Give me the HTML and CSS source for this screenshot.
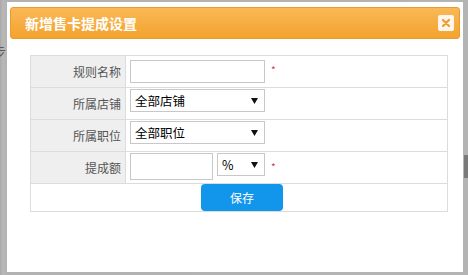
FILE: index.html
```html
<!DOCTYPE html>
<html lang="zh-CN">
<head>
<meta charset="utf-8">
<title>新增售卡提成设置</title>
<link rel="stylesheet" href="styles.css">
</head>
<body>
<span class="bg-text">步</span>
<span class="bg-patch"></span>
<div class="dialog">
  <div class="dialog-header">
    <span class="dialog-title">新增售卡提成设置</span>
    <span class="close-btn">
      <svg width="8" height="8" viewBox="0 0 8 8"><path d="M1 1L7 7M7 1L1 7" stroke="#f29a2b" stroke-width="2.2" stroke-linecap="round"/></svg>
    </span>
  </div>
  <div class="form">
    <div class="row">
      <div class="label">规则名称</div>
      <div class="field field-first">
        <input class="text-input" type="text">
        <span class="req">*</span>
      </div>
    </div>
    <div class="row">
      <div class="label">所属店铺</div>
      <div class="field">
        <div class="select">
          <span>全部店铺</span>
          <svg class="arrow" width="7" height="6" viewBox="0 0 7 6"><path d="M0 0H7L3.5 6Z" fill="#111"/></svg>
        </div>
      </div>
    </div>
    <div class="row">
      <div class="label">所属职位</div>
      <div class="field">
        <div class="select">
          <span>全部职位</span>
          <svg class="arrow" width="7" height="6" viewBox="0 0 7 6"><path d="M0 0H7L3.5 6Z" fill="#111"/></svg>
        </div>
      </div>
    </div>
    <div class="row">
      <div class="label">提成额</div>
      <div class="field">
        <input class="text-input amount" type="text">
        <div class="select unit">
          <span>%</span>
          <svg class="arrow" width="7" height="6" viewBox="0 0 7 6"><path d="M0 0H7L3.5 6Z" fill="#111"/></svg>
        </div>
        <span class="req req-amount">*</span>
      </div>
    </div>
    <div class="row row-actions">
      <button class="save-btn" type="button">保存</button>
    </div>
  </div>
</div>
</body>
</html>
```

FILE: styles.css
```css
html, body {
  margin: 0;
  padding: 0;
}

body {
  width: 468px;
  height: 275px;
  box-sizing: border-box;
  padding: 2px 5px 3px 7px;
  background: linear-gradient(90deg, #a9a9a9 0, #b8b8b8 3px, #b2b2b2 7px, #b4b4b4 100%);
  font-family: "Noto Sans CJK SC", "Microsoft YaHei", sans-serif;
  position: relative;
  overflow: hidden;
}

.bg-text {
  position: absolute;
  left: -8px;
  top: 41px;
  font-size: 14px;
  color: #5a5a5a;
}

.bg-patch {
  position: absolute;
  left: 464px;
  top: 155px;
  width: 4px;
  height: 23px;
  background: #7a7a7a;
}

.dialog {
  position: relative;
  height: 270px;
  background: #fff;
  display: flex;
  flex-direction: column;
}

.dialog-header {
  margin: 5px 3px 0 3px;
  height: 32px;
  box-sizing: border-box;
  border: 1px solid #eb9a30;
  border-radius: 3px;
  background: linear-gradient(180deg, #f9b957 0%, #f6ad42 50%, #f4a32e 100%);
  display: flex;
  align-items: center;
  justify-content: space-between;
  padding: 0 5px 0 14px;
}

.dialog-title {
  color: #fff;
  font-size: 14px;
  font-weight: bold;
}

.close-btn {
  width: 16px;
  height: 16px;
  border-radius: 2px;
  background: #fdf6ec;
  display: flex;
  align-items: center;
  justify-content: center;
}

.form {
  margin: 16px 0 0 23px;
  width: 418px;
  box-sizing: border-box;
  border: 1px solid #dcdcdc;
}

.row {
  display: grid;
  grid-template-columns: 95px 1fr;
  height: 32px;
  box-sizing: border-box;
  border-bottom: 1px solid #dcdcdc;
}

.label {
  background: #efefef;
  border-right: 1px solid #dcdcdc;
  text-align: right;
  padding-right: 4px;
  font-size: 12px;
  line-height: 31px;
  color: #555;
}

.field {
  display: flex;
  align-items: flex-start;
  padding: 1px 0 0 4px;
}

.field-first {
  padding-top: 4px;
}

.text-input {
  width: 135px;
  height: 23px;
  box-sizing: border-box;
  border: 1px solid #c8c8c8;
  margin: 0;
  padding: 0 4px;
  font: inherit;
  outline: none;
}

.text-input.amount {
  width: 83px;
  height: 27px;
}

.select {
  width: 135px;
  height: 23px;
  box-sizing: border-box;
  border: 1px solid #c8c8c8;
  display: flex;
  align-items: center;
  justify-content: space-between;
  padding: 0 6px 0 4px;
  font-size: 12.5px;
  color: #000;
  background: #fff;
}

.select.unit {
  width: 48px;
  margin-left: 4px;
}

.arrow {
  display: block;
}

.req {
  color: #d33a3a;
  font-size: 10px;
  margin: 5px 0 0 6px;
  line-height: 1;
}

.req-amount {
  margin-top: 9px;
}

.row-actions {
  display: flex;
  border-bottom: none;
  height: 27px;
  padding-left: 170px;
}

.save-btn {
  width: 82px;
  height: 27px;
  border: none;
  border-radius: 4px;
  background: #1296ec;
  color: #fff;
  font-family: inherit;
  font-size: 12px;
  padding: 0;
  margin: 0;
}
```
